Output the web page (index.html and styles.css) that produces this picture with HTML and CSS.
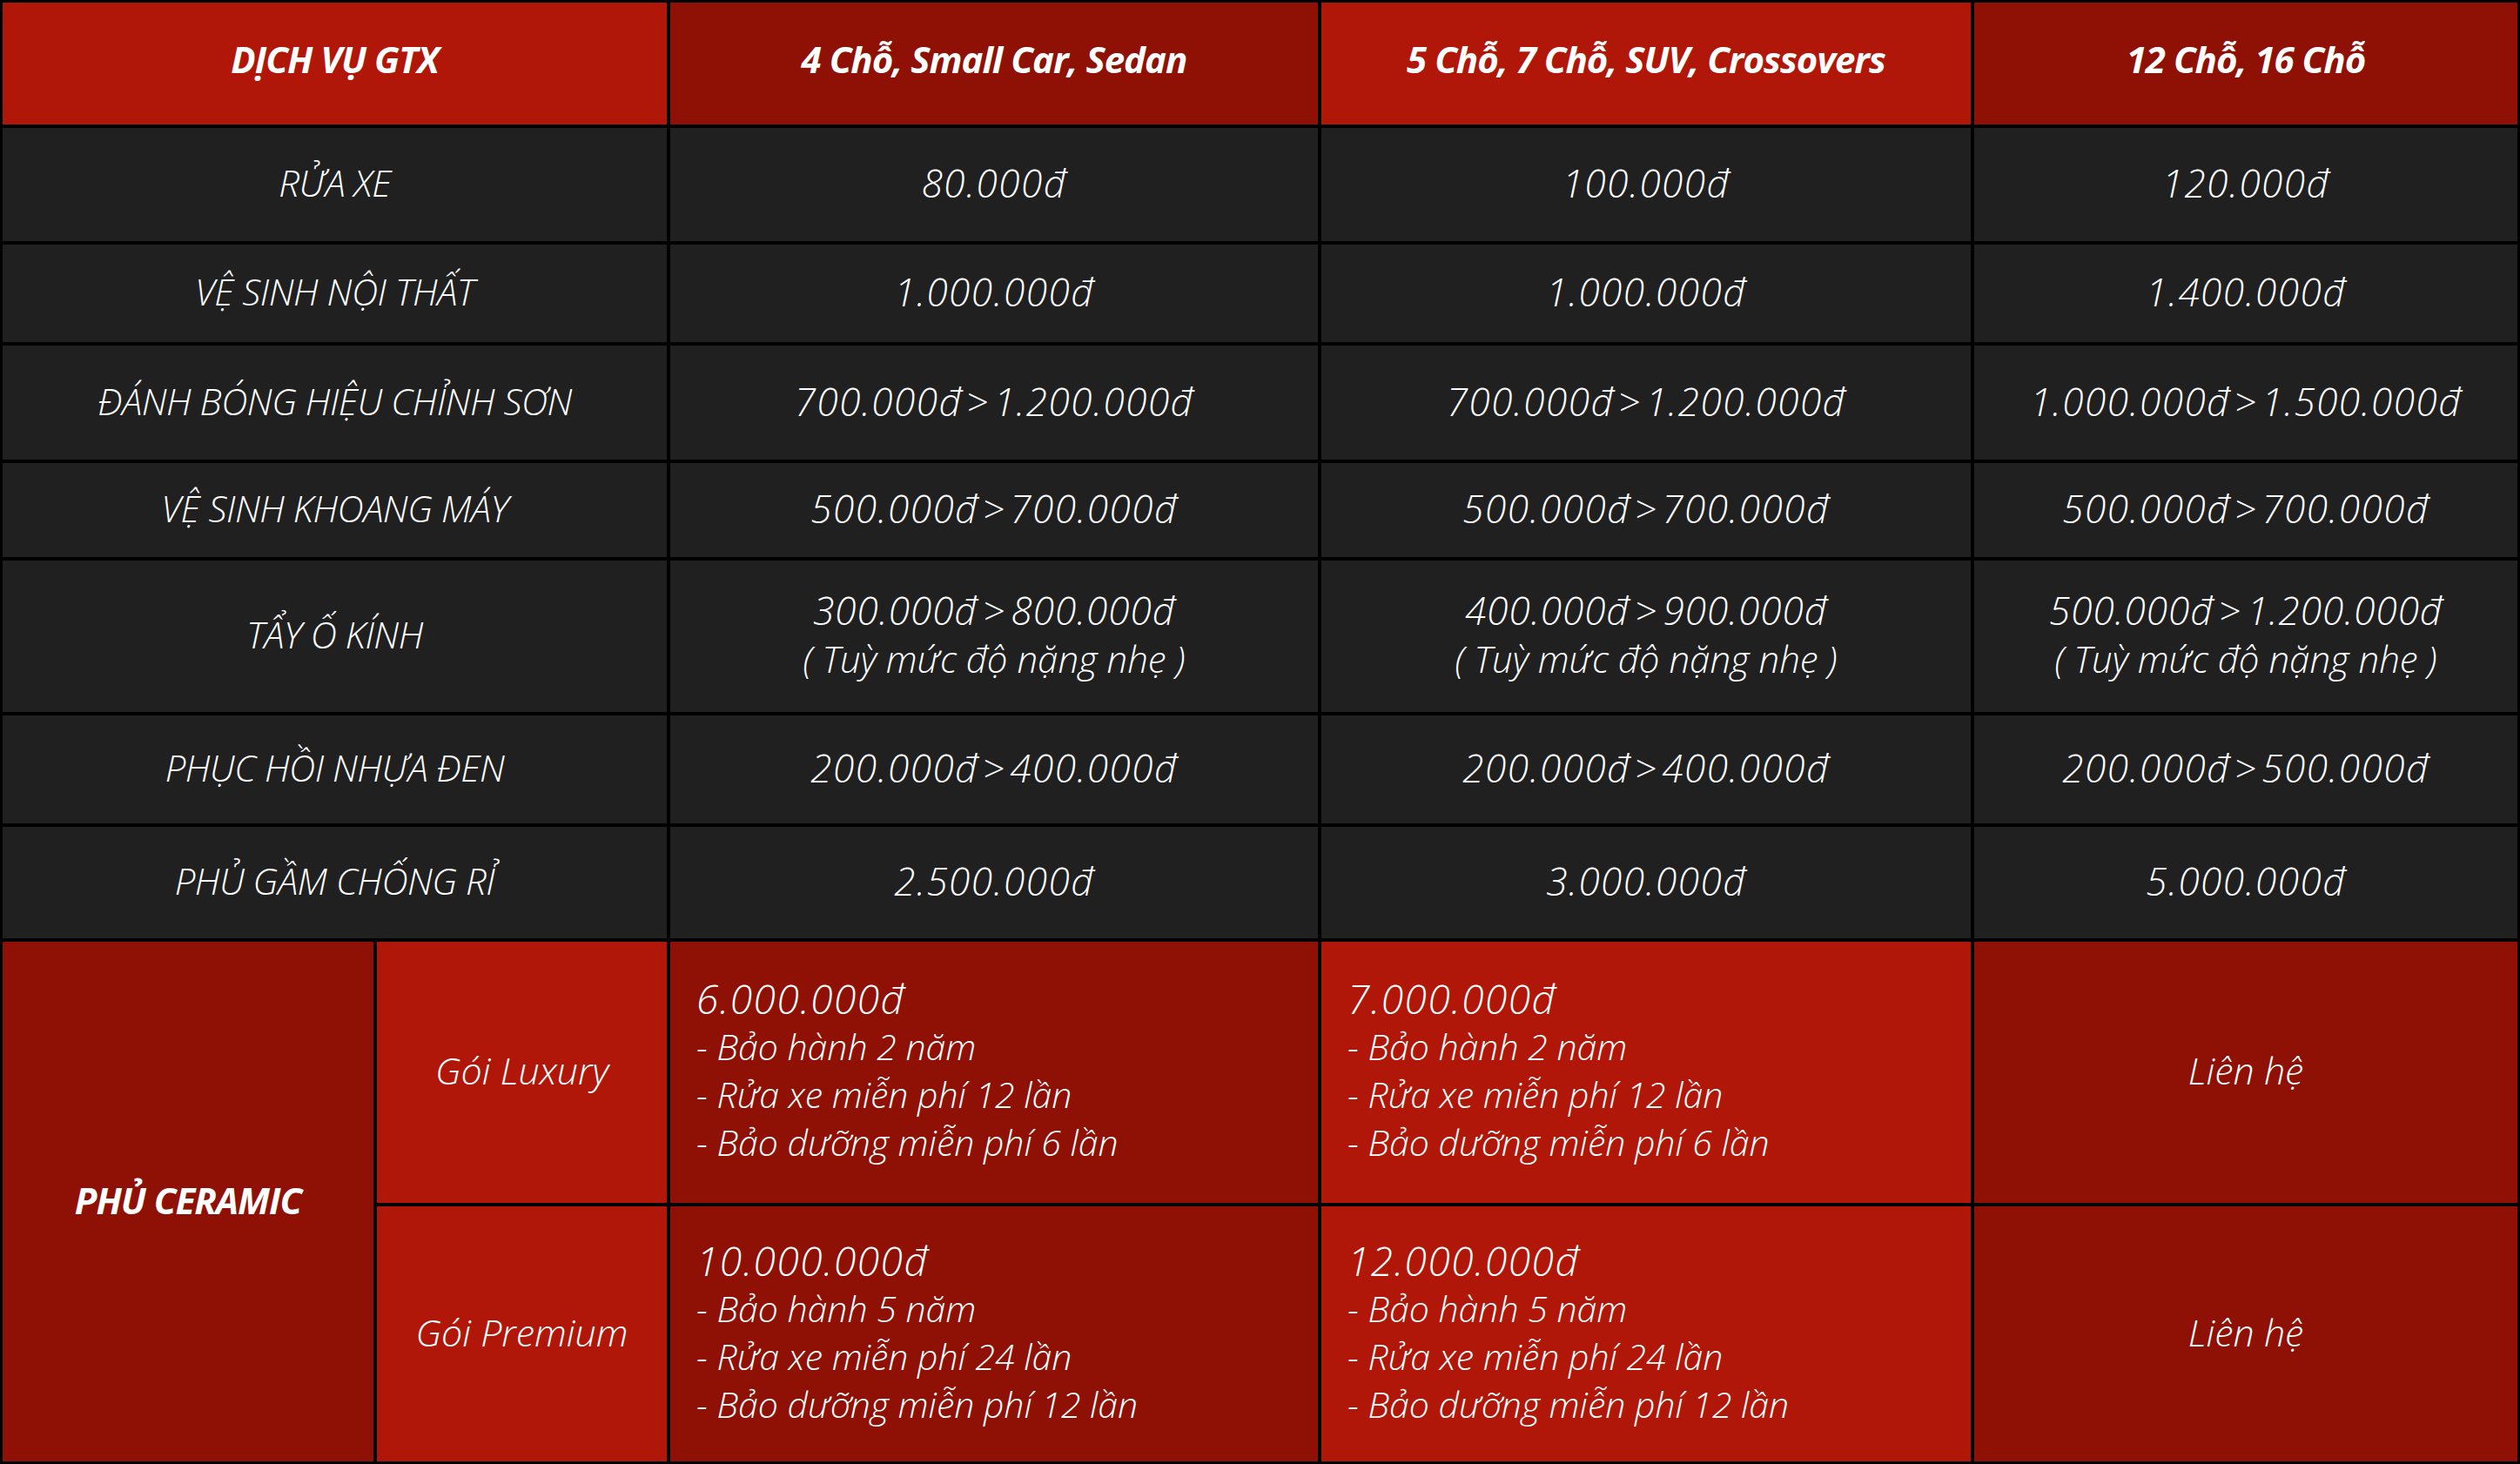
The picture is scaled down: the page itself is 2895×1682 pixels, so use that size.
FILE: index.html
```html
<!DOCTYPE html>
<html lang="vi">
<head>
<meta charset="utf-8">
<title>Bảng giá dịch vụ GTX</title>
<link rel="stylesheet" href="styles.css">
</head>
<body>
<div class="price-table">
  <div class="cell head bright span-label">DỊCH VỤ GTX</div>
  <div class="cell head dark">4 Chỗ, Small Car, Sedan</div>
  <div class="cell head bright">5 Chỗ, 7 Chỗ, SUV, Crossovers</div>
  <div class="cell head dark">12 Chỗ, 16 Chỗ</div>

  <div class="cell body label span-label">RỬA XE</div>
  <div class="cell body price">80.000đ</div>
  <div class="cell body price">100.000đ</div>
  <div class="cell body price">120.000đ</div>

  <div class="cell body label span-label">VỆ SINH NỘI THẤT</div>
  <div class="cell body price">1.000.000đ</div>
  <div class="cell body price">1.000.000đ</div>
  <div class="cell body price">1.400.000đ</div>

  <div class="cell body label span-label">ĐÁNH BÓNG HIỆU CHỈNH SƠN</div>
  <div class="cell body price">700.000đ &gt; 1.200.000đ</div>
  <div class="cell body price">700.000đ &gt; 1.200.000đ</div>
  <div class="cell body price">1.000.000đ &gt; 1.500.000đ</div>

  <div class="cell body label span-label">VỆ SINH KHOANG MÁY</div>
  <div class="cell body price">500.000đ &gt; 700.000đ</div>
  <div class="cell body price">500.000đ &gt; 700.000đ</div>
  <div class="cell body price">500.000đ &gt; 700.000đ</div>

  <div class="cell body label span-label">TẨY Ố KÍNH</div>
  <div class="cell body two"><span class="price-line">300.000đ &gt; 800.000đ</span><span>( Tuỳ mức độ nặng nhẹ )</span></div>
  <div class="cell body two"><span class="price-line">400.000đ &gt; 900.000đ</span><span>( Tuỳ mức độ nặng nhẹ )</span></div>
  <div class="cell body two"><span class="price-line">500.000đ &gt; 1.200.000đ</span><span>( Tuỳ mức độ nặng nhẹ )</span></div>

  <div class="cell body label span-label">PHỤC HỒI NHỰA ĐEN</div>
  <div class="cell body price">200.000đ &gt; 400.000đ</div>
  <div class="cell body price">200.000đ &gt; 400.000đ</div>
  <div class="cell body price">200.000đ &gt; 500.000đ</div>

  <div class="cell body label span-label">PHỦ GẦM CHỐNG RỈ</div>
  <div class="cell body price">2.500.000đ</div>
  <div class="cell body price">3.000.000đ</div>
  <div class="cell body price">5.000.000đ</div>

  <div class="cell dark ceramic">PHỦ CERAMIC</div>
  <div class="cell bright pkg">Gói Luxury</div>
  <div class="cell dark list">
    <span class="amount">6.000.000đ</span>
    <span>- Bảo hành 2 năm</span>
    <span>- Rửa xe miễn phí 12 lần</span>
    <span>- Bảo dưỡng miễn phí 6 lần</span>
  </div>
  <div class="cell bright list">
    <span class="amount">7.000.000đ</span>
    <span>- Bảo hành 2 năm</span>
    <span>- Rửa xe miễn phí 12 lần</span>
    <span>- Bảo dưỡng miễn phí 6 lần</span>
  </div>
  <div class="cell dark pkg">Liên hệ</div>

  <div class="cell bright pkg">Gói Premium</div>
  <div class="cell dark list">
    <span class="amount">10.000.000đ</span>
    <span>- Bảo hành 5 năm</span>
    <span>- Rửa xe miễn phí 24 lần</span>
    <span>- Bảo dưỡng miễn phí 12 lần</span>
  </div>
  <div class="cell bright list">
    <span class="amount">12.000.000đ</span>
    <span>- Bảo hành 5 năm</span>
    <span>- Rửa xe miễn phí 24 lần</span>
    <span>- Bảo dưỡng miễn phí 12 lần</span>
  </div>
  <div class="cell dark pkg">Liên hệ</div>
</div>
</body>
</html>
```

FILE: styles.css
```css
* { box-sizing: border-box; }

html, body {
  margin: 0;
  padding: 0;
  background: #000;
}

body {
  width: 2895px;
  height: 1682px;
  font-family: "Open Sans", "Roboto", "DejaVu Sans", sans-serif;
  color: #fff;
}

.price-table {
  display: grid;
  grid-template-columns: 426px 333px 744px 746px 1fr;
  grid-template-rows: 140px 130px 112px 131px 108px 174px 124px 128px 300px 1fr;
  gap: 4px;
  padding: 3px;
  width: 2895px;
  height: 1682px;
  background: #000;
}

.cell {
  display: flex;
  flex-direction: column;
  align-items: center;
  justify-content: center;
  text-align: center;
  font-style: italic;
  font-weight: 300;
  font-size: 42px;
  line-height: 58px;
  white-space: nowrap;
  padding-bottom: 4px;
}

.span-label { grid-column: 1 / span 2; }

.bright { background: #b01708; }
.dark { background: #8f1004; }
.body { background: #202020; }

.label { letter-spacing: -0.5px; }

.price {
  font-size: 44px;
  letter-spacing: 1.5px;
  word-spacing: -8px;
}

.head {
  font-weight: 700;
  font-size: 42px;
  letter-spacing: -1px;
  padding-bottom: 10px;
}

.ceramic {
  grid-row: span 2;
  font-weight: 700;
  font-size: 42px;
  letter-spacing: -1px;
}

.pkg { font-size: 43px; }

.two {
  font-size: 42px;
  line-height: 55px;
}

.price-line {
  font-size: 44px;
  letter-spacing: 1px;
  word-spacing: -6px;
}

.list {
  align-items: flex-start;
  text-align: left;
  padding-left: 30px;
  font-size: 41px;
  line-height: 55px;
}

.amount {
  font-size: 46px;
  letter-spacing: 1.5px;
}
```
